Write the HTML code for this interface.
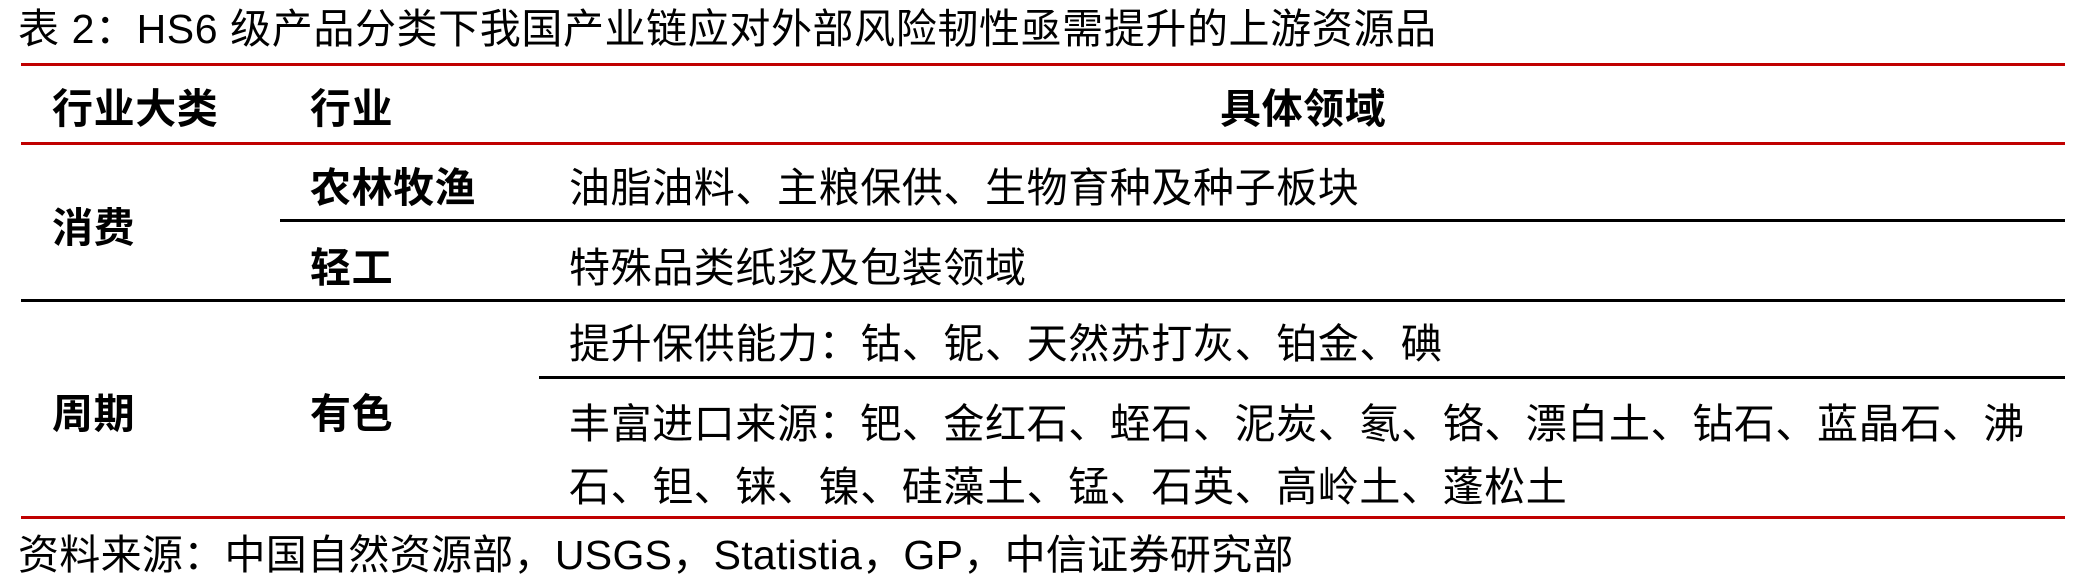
<!DOCTYPE html>
<html><head><meta charset="utf-8"><style>
body{margin:0;width:2081px;height:571px;background:#fff;position:relative;overflow:hidden;font-family:"Liberation Sans","Noto Sans CJK SC",sans-serif;color:#000}
.t{position:absolute;white-space:nowrap;font-size:41px;line-height:41px;letter-spacing:0.6px}
.b{font-weight:bold}
.l{position:absolute;height:3px}
.r{background:#c00000}
.k{background:#000;height:3px}
</style></head><body>
<div class="t" style="left:18px;top:9px;font-size:41px;line-height:41px;letter-spacing:0.6px">表 2：HS6 级产品分类下我国产业链应对外部风险韧性亟需提升的上游资源品</div>
<div class="l r" style="left:21px;width:2044px;top:63px"></div>
<div class="t b" style="left:52px;top:89px">行业大类</div>
<div class="t b" style="left:310px;top:89px">行业</div>
<div class="t b" style="left:1220px;top:89px">具体领域</div>
<div class="l r" style="left:21px;width:2044px;top:142px"></div>
<div class="t b" style="left:310px;top:168px">农林牧渔</div>
<div class="t" style="left:569px;top:168px">油脂油料、主粮保供、生物育种及种子板块</div>
<div class="l k" style="left:280px;width:1785px;top:219px"></div>
<div class="t b" style="left:52px;top:208px">消费</div>
<div class="t b" style="left:310px;top:248px">轻工</div>
<div class="t" style="left:569px;top:248px">特殊品类纸浆及包装领域</div>
<div class="l k" style="left:21px;width:2044px;top:299px"></div>
<div class="t" style="left:569px;top:324px">提升保供能力：钴、铌、天然苏打灰、铂金、碘</div>
<div class="l k" style="left:539px;width:1526px;top:376px"></div>
<div class="t b" style="left:52px;top:394px">周期</div>
<div class="t b" style="left:310px;top:394px">有色</div>
<div class="t" style="left:569px;top:404px">丰富进口来源：钯、金红石、蛭石、泥炭、氡、铬、漂白土、钻石、蓝晶石、沸</div>
<div class="t" style="left:569px;top:467px">石、钽、铼、镍、硅藻土、锰、石英、高岭土、蓬松土</div>
<div class="l r" style="left:21px;width:2044px;top:516px"></div>
<div class="t" style="left:18px;top:535px;font-size:41px;line-height:41px;letter-spacing:0.3px">资料来源：中国自然资源部，USGS，Statistia，GP，中信证券研究部</div>
</body></html>
